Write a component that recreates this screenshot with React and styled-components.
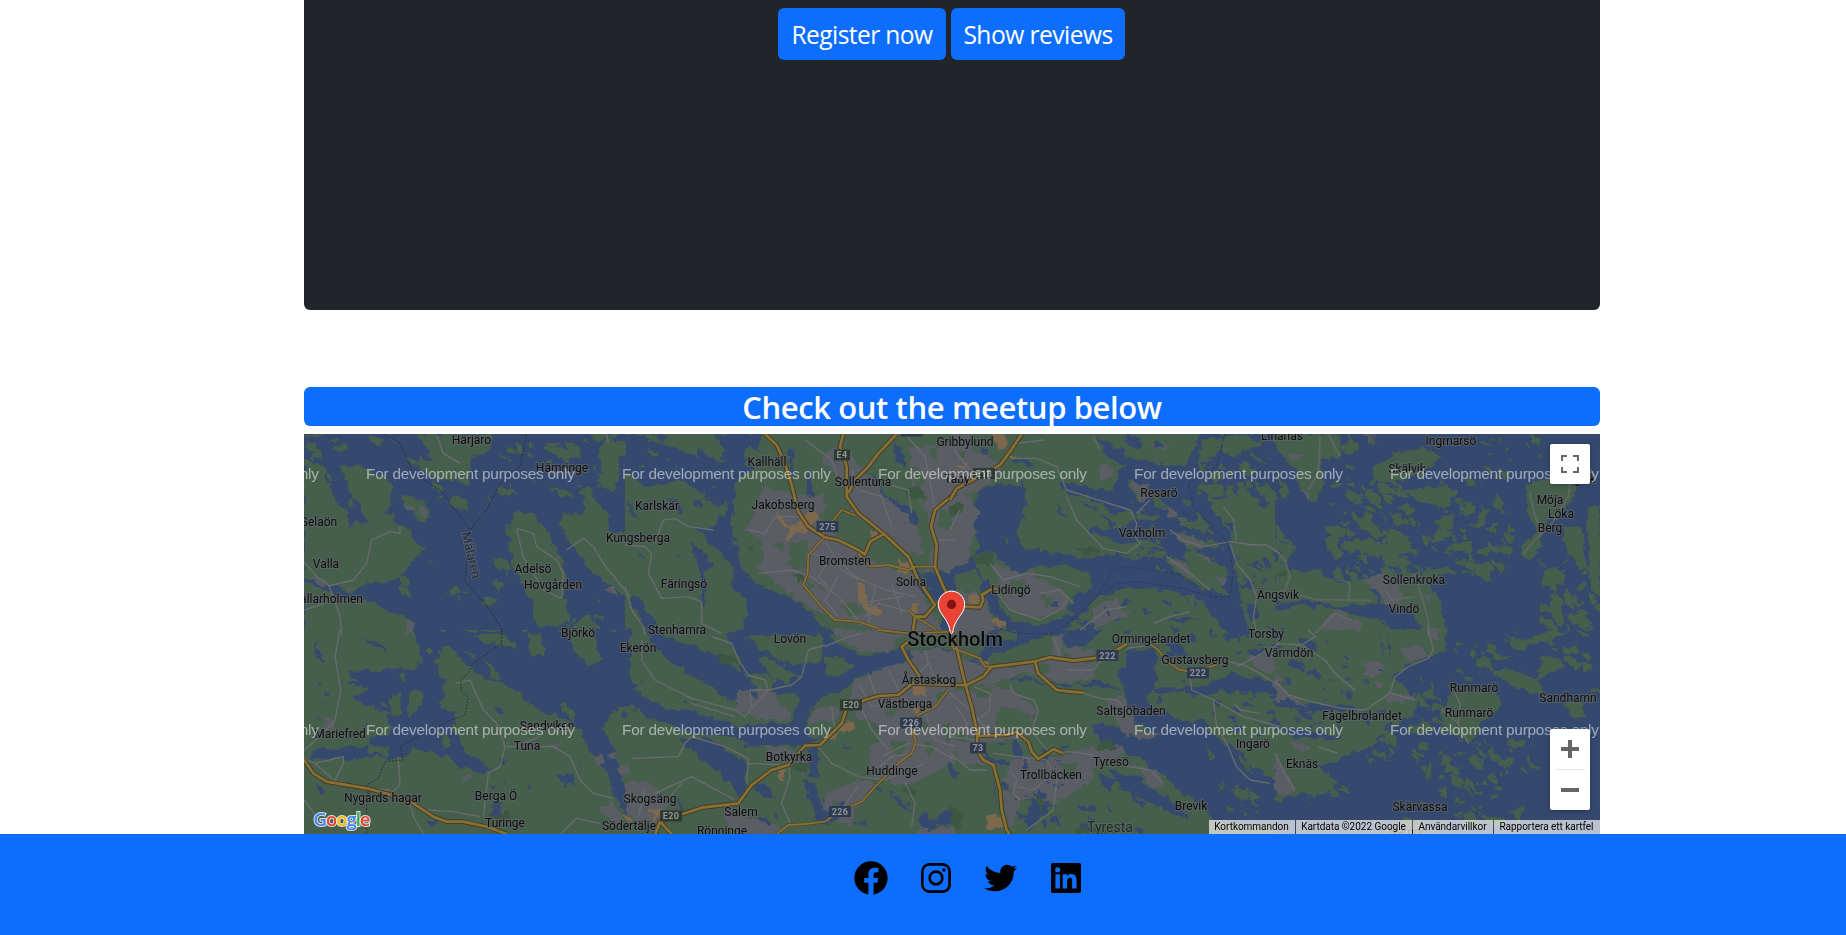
import React from "react";
import styled, { createGlobalStyle } from "styled-components";
import {
  BiLogoFacebookCircle,
  BiLogoInstagram,
  BiLogoTwitter,
  BiLogoLinkedinSquare,
} from "react-icons/bi";

const GlobalStyle = createGlobalStyle`
  *, *::before, *::after { box-sizing: border-box; }
  body {
    margin: 0;
    background: #fff;
    font-family: "Open Sans", "Noto Sans", sans-serif;
    overflow: hidden;
  }
`;

const Page = styled.div`
  display: flex;
  flex-direction: column;
  height: 935px;
`;

const Content = styled.main`
  width: 1296px;
  margin-left: 304px;
  display: flex;
  flex-direction: column;
`;

const Hero = styled.section`
  display: flex;
  justify-content: center;
  align-items: flex-start;
  gap: 5px;
  height: 310px;
  padding: 8px 1px 0 0;
  background: #212529;
  border-radius: 0 0 6px 6px;
`;

const Button = styled.button`
  width: ${(p) => p.$width}px;
  height: 52px;
  padding: 0;
  border: 0;
  border-radius: 6px;
  background: #0d6efd;
  color: #fff;
  font-family: inherit;
  font-size: 24.6px;
  line-height: 53px;
  letter-spacing: ${(p) => p.$tracking}px;
  white-space: nowrap;
`;

const Heading = styled.h2`
  margin: 77px 0 8px;
  height: 39px;
  border-radius: 6px;
  background: #0d6efd;
  color: #fff;
  font-size: 31px;
  font-weight: 600;
  line-height: 40px;
  letter-spacing: -0.4px;
  text-align: center;
  white-space: nowrap;
`;

const MapFrame = styled.section`
  position: relative;
  height: 400px;
  overflow: hidden;
  background: #35496e;
`;

const MapSvg = styled.svg`
  display: block;
  width: 1296px;
  height: 400px;
`;

const MapControls = styled.div`
  position: absolute;
  top: 10px;
  right: 10px;
  bottom: 24px;
  width: 40px;
  display: flex;
  flex-direction: column;
  justify-content: space-between;
`;

const ControlBox = styled.div`
  display: flex;
  flex-direction: column;
  align-items: center;
  height: ${(p) => p.$height}px;
  background: #fff;
  border-radius: 2px;
  box-shadow: 0 1px 4px rgba(0, 0, 0, 0.3);
`;

const ControlButton = styled.button`
  width: 40px;
  height: 40px;
  padding: 0;
  border: 0;
  background: transparent;
  display: flex;
  align-items: center;
  justify-content: center;
`;

const ControlDivider = styled.div`
  width: 30px;
  height: 1px;
  background: #e6e6e6;
`;

const Attribution = styled.div`
  position: absolute;
  right: 0;
  bottom: 0;
  display: flex;
  gap: 1px;
  height: 14px;
`;

const AttributionItem = styled.span`
  width: ${(p) => p.$width}px;
  padding-right: 1px;
  background: rgba(245, 245, 245, 0.7);
  color: #000;
  font: 10px/14px Roboto, sans-serif;
  letter-spacing: -0.03px;
  text-align: center;
  white-space: nowrap;
`;

const Footer = styled.footer`
  display: flex;
  align-items: flex-start;
  gap: 25px;
  height: 101px;
  padding: 24px 0 0 851px;
  background: #0d6efd;
  color: #000;
  svg { width: 40px; height: 40px; flex: none; }
`;

const WATER = "#35496e";
const LAND = "#465f4c";
const TOWN = "#5a5d64";
const PARK = "#3d5642";
const SAND = "#7e684d";

// Map sheets: origin on the map, base fill and [colour, path] layers at 3 units per pixel.
const sheets = [
  {
    x: 300, y: 430, base: WATER,
    layers: [
      [LAND, "M12 12H75L60 20 20 25ZM22 45 42 36 48 55 32 66ZM12 90 50 98 80 120 72 150 100 165 105 210 140 240 155 295 170 272 185 290 210 275 180 240 160 200 140 160 122 108 175 112 250 138 280 175 265 235 230 260 300 280 330 300 345 330 370 358 320 420 300 440 255 455 210 465 150 490 95 468 12 440Z"],
      [LAND, "M12 455 60 475 90 490 150 505 215 512 260 540 320 560 350 600 360 615H12ZM350 12H575L570 60 540 75 510 80 512 110 500 165 482 160 470 120 420 110 380 60ZM355 85 420 95 480 130 460 150 395 140 360 115ZM300 195 340 200 390 240 380 275 350 265 320 240ZM440 210 470 195 500 210 500 240 470 235Z"],
      [LAND, "M625 280 650 245 700 250 740 300 770 360 790 390 800 450 790 500 800 540 795 585 750 590 710 585 695 550 700 510 665 470 640 400 625 340ZM865 190 900 220 925 260 930 300 970 310 990 280V500L950 480 910 450 860 410 830 360 800 330 780 280 790 240 850 260ZM720 50 800 60 850 80 800 92ZM920 30H990V60L960 90 950 180 900 175 895 140 920 120 890 80ZM870 12H960L940 25 880 30ZM750 170 800 180 830 205 790 200ZM830 185 870 190 900 225 860 215ZM580 455 600 440 595 455 620 470 590 485ZM445 480 470 465 485 495 455 500ZM200 12 250 35 240 50 210 30ZM825 585 850 560 900 590 910 615H820Z"],
      [TOWN, "M315 220 345 225 340 245 320 240ZM355 225 375 240 380 265 360 250ZM765 380 780 375 775 395ZM915 475 940 470 960 500 930 490ZM320 575 345 580 335 615 320 610ZM30 435 90 460 60 470ZM140 465 165 475 150 485Z"],
    ],
    roads: ["M12 395 50 440 85 465 100 500 120 560 125 615M85 468 160 450 200 400 215 330 270 305 300 310 300 290M650 300 670 380 730 480 785 505 790 430 770 390 710 350 700 310 650 295M800 360 850 325 880 350 910 400 950 450 990 500M410 15 430 70 480 100M12 540 90 515M925 40 920 12"],
    rail: ["M250 12 300 40 340 130 420 180 510 300M680 12 660 110 600 160 560 240 510 300 495 455 570 540 610 605"],
  },
  {
    x: 300, y: 630, base: LAND,
    layers: [
      [WATER, "M350 30 330 0H990V220L960 230 930 260 905 300 930 340 950 380 965 430 990 520V570L960 530 940 480 920 420 870 360 830 290 780 265 730 240 680 220 650 180 600 160 550 140 500 110 470 60 430 50 405 90 410 130 440 150 430 190 420 230 470 250 455 290 480 340 500 370 580 420 560 432 480 410 440 380 380 365 340 360 310 385 220 378 150 390 50 385 20 390 60 355 200 350 220 320 265 315 275 290 260 240 200 230 160 200 200 180 150 130 200 110 220 130 270 115 350 110 360 65Z"],
      [WATER, "M770 435 815 435 828 460 790 465ZM45 40 75 80 70 100 45 65ZM200 25 255 50 258 65 230 55ZM370 572H430L400 590ZM580 520H605L595 560 570 565ZM40 455 75 485 60 490ZM590 235H605V245H590ZM50 150 62 165 58 175ZM565 460 590 465 580 480Z"],
      [LAND, "M520 12 600 10 650 40 640 55 560 40ZM685 10 720 20 735 80 690 75ZM805 0H880L905 95 860 105 820 60ZM480 60 520 75 525 90ZM545 85 580 110 605 150 580 140ZM270 200 300 192 305 255 275 262ZM340 175 370 190 360 230 330 265 322 235ZM420 305 450 320 458 355 430 360ZM195 345 270 350 260 375 210 370ZM310 140 322 158 308 152ZM780 220 820 240 828 280 800 260Z"],
      [TOWN, "M75 265 105 270 95 305 70 300ZM735 340 785 340 775 360ZM880 385 905 370 915 400 890 405ZM485 445 510 430 520 440 495 455ZM920 375 945 370 950 385ZM950 415 990 400V430L960 435ZM900 530 940 515 975 580 920 560Z"],
      [SAND, "M965 560 990 555V575Z"],
      [PARK, "M570 560 620 540 630 560 600 575Z"],
    ],
    roads: ["M120 0 105 80 122 180 105 270 60 320 12 360M12 385 45 400 100 450 200 475 270 480M45 400 130 380 130 400 105 450M295 380 300 465 250 510M12 510 50 560M380 540 460 545 540 560M465 160 510 150 550 240 590 280 615 350 600 410 565 430 550 560M615 350 760 350 810 380 840 450 880 490 940 505M780 615 830 565 900 580M330 525 345 570 370 610M640 350 720 320"],
    rail: ["M605 0V40L520 100 505 130 482 150 485 185 505 205 495 255 440 275 300 350 310 390 255 395 235 445 200 465V615"],
    gold: ["M12 390 40 430 80 455 200 475 265 492 340 520 400 560 440 575 490 575 560 590 620 612"],
  },
  {
    x: 625, y: 430, base: LAND,
    layers: [
      [WATER, "M0 12H130L100 40 180 60 230 90 260 130 270 170 230 190 180 150 120 160 60 175 30 140 0 130ZM270 12H410L400 60 370 45 350 90 382 120 330 160 330 230 320 290 335 330 340 400 380 450 440 480 510 510 600 590 640 615H350L360 560 370 510 320 480 330 420 300 380 250 340 210 290 260 300 290 240 240 200 250 150 200 110 220 60 280 100 300 60Z"],
      [WATER, "M200 335 240 370 270 410 240 425 245 520 235 530 225 420 200 370ZM30 490 60 540 100 580 110 615H70L50 570 20 520ZM490 50 505 60 510 140 500 160 495 110ZM545 125H565L560 200 545 212ZM735 130 790 200 870 240 880 270 860 300 800 240 760 200ZM812 35 830 60 838 120 815 85ZM895 430 990 425V615L940 590 960 530 920 500ZM870 400 910 480 930 520 900 500 870 440ZM0 210 40 260 20 260Z"],
      [LAND, "M60 15 90 15 105 35 70 30ZM60 60 110 70 100 85 70 80ZM280 240 300 210 310 230 290 270ZM320 320 350 340 340 360Z"],
      [TOWN, "M420 170 520 200 600 190 590 300 640 320 720 380 870 440 930 560 960 615H830L640 570 560 540 480 480 395 415 420 370 400 320 355 300 385 260ZM600 60 640 50 700 100 770 190 870 280 900 370 850 370 780 310 680 250 660 150 600 110ZM850 50 990 40V425H900L930 340 905 250 860 170Z"],
      [LAND, "M640 240 720 270 750 320 720 350 650 320ZM490 340 545 330 545 420 490 400ZM785 330 840 380 860 400 790 395 720 380ZM580 460 600 470 600 490ZM440 350 470 330 480 370ZM860 110 890 120 900 170 870 160ZM940 240 985 250 970 300 945 290ZM600 190 630 170 640 220 610 230ZM650 530 700 520 720 550 670 560ZM900 60 940 50 930 90ZM540 450 570 460 560 490ZM880 190 910 200 900 230Z"],
      [PARK, "M500 430 530 430 545 455 520 455ZM845 180 880 160 900 200 860 210ZM370 350 390 350 385 380Z"],
      [SAND, "M455 240 490 290 520 275 550 245 585 245 580 265 530 310 485 328 490 300 460 270ZM695 450 720 465 735 525 775 540 760 560 720 540 700 500ZM820 390 865 400 850 430 820 425ZM735 300 760 310 740 325ZM790 490 805 500 790 510ZM855 515 880 530 870 550Z"],
    ],
    roads: ["M0 470 20 540 55 590 60 615M0 345 60 350 80 370 70 430 110 505 190 500 230 515 230 580 290 610M100 310 115 270 150 265 190 290 265 300M100 310 90 340M540 30 620 90 640 150M400 430 500 420 560 440 640 500 700 570M555 370 640 390 690 440 780 480 870 500M370 300 420 310 450 260 520 260M600 330 650 420 700 450M840 12 900 80 920 180 930 240M780 160 850 180 860 250M680 120 700 180 770 200 800 290M640 440 600 510 640 560M720 560 760 520 850 545M940 330 990 330M620 380 580 440 610 470M750 470 730 580 770 600M800 460 830 550M700 520 830 500"],
    gold: ["M420 12 455 45 480 100 500 165 520 245 550 290 600 322 640 330 700 360 720 373 735 335 780 310", "M655 12 645 50 665 110 665 200 700 250 780 315 850 380 880 450 930 525 900 560 870 560 862 615", "M815 12 760 70 730 110 690 150 670 190", "M990 190 930 240 918 290 935 345 930 410 955 470 990 540"],
    thin: ["M595 325 550 375 548 430 535 465 590 530 630 570 700 575 790 605 850 610", "M595 312 600 300 650 240 695 258", "M700 370 735 410 790 405 850 420 870 410 930 410", "M850 540 870 560 920 590 950 615"],
  },
  {
    x: 625, y: 630, base: LAND,
    layers: [
      [WATER, "M0 100 40 190 100 220 130 240 200 240 300 280 350 290 390 280 500 280 510 230 530 200 500 190 430 190 460 150 400 130 360 130 330 60 300 10 340 0 410 60 480 100 600 100 720 80 830 50 845 75 750 120 700 140 640 190 590 205 550 240 545 320 590 325 540 345 360 348 330 320 200 310 110 270 60 260 0 200ZM60 0 130 20 260 70 360 130 400 180 370 200 310 212 240 160 140 100 90 50Z"],
      [WATER, "M180 325 240 320 290 350 365 400 360 490 340 500 280 420 220 380ZM545 355 578 350 580 440 555 440ZM540 455H570L600 580 570 570ZM590 0 650 50 760 100 850 60 990 55V90L870 88 770 120 620 150 590 100ZM890 550 930 575 990 520V580L900 600 880 575ZM390 460 440 485 450 500 410 495ZM740 265 780 300 800 320 750 290ZM645 345 680 355 665 362ZM150 480 180 550 170 550ZM780 470 840 520 860 560 820 520Z"],
      [LAND, "M600 80 650 75 690 110 640 140 600 130ZM400 70 480 110 530 140 480 155 420 130ZM140 150 210 185 240 200 180 210ZM240 200 310 230 380 220 340 250 260 235ZM20 170 90 180 130 230 80 215Z"],
      [TOWN, "M340 180 430 180 500 250 490 270 400 270 330 240ZM560 235 640 225 640 270 555 285ZM690 150 760 120 860 92 990 90V400L900 440 860 460 740 440 730 340 770 300 700 260 660 220ZM415 345 500 360 550 400 545 435 480 400 425 385ZM600 490 700 450 760 460 690 530 680 590 600 560ZM300 530 360 560 460 580 470 615H340L290 570ZM0 460 80 450 130 510 100 580 30 570 0 540ZM620 0H840L790 70 700 60ZM860 60H990V90H870ZM760 400 900 440 850 470 770 450ZM870 600 990 590V615H870Z"],
      [LAND, "M690 290 745 280 760 340 720 350ZM870 270 920 280 900 310ZM930 190 975 180 950 215ZM800 330 850 340 830 380 800 370ZM890 330 930 350 910 380ZM780 230 820 240 800 260ZM620 510 650 520 640 550ZM950 280 985 290 970 340Z"],
      [PARK, "M280 70 330 80 340 100 290 105ZM480 395 550 400 545 430 500 420ZM830 470 880 480 860 510Z"],
      [SAND, "M635 300 655 270 690 280 690 295 640 310ZM600 315 640 310 630 330 605 330ZM865 170 905 165 900 190 870 200ZM460 410 490 420 475 458 460 440ZM70 545 110 535 120 550 90 570ZM0 560 20 570 0 580ZM855 240 890 230 880 260Z"],
    ],
    roads: ["M50 30V90L90 150 200 205 330 240 360 260 385 230 430 180 500 165 530 140 550 60 600 45M380 235 375 180 430 180M90 490 200 440 330 510M130 505 170 460M20 385 160 380 180 340 200 320 300 350 370 385 365 460M370 400 480 405M490 400 495 440 470 520 495 580M580 350 620 400 700 440 780 450 900 400M840 455 870 520 860 590M700 215 740 300 790 360M600 50 670 20 710 10M260 20 320 40 340 90 370 135 420 150 430 180M700 160 740 230 850 215M730 130 760 220M790 120 830 200 850 215M770 380 850 340 920 350 990 390M900 60 910 100 880 130M900 250 930 330 990 350M740 430 800 380 860 370M640 550 700 470M60 480 40 560M200 220 330 260M620 230 630 300M910 100 940 160"],
    gold: ["M90 615 105 575 170 553 230 533 340 520 380 465 440 420 490 405 540 347 585 345 620 310 650 280 665 235 720 210 760 198 820 195 850 170 885 140 850 90 830 50 850 35", "M990 165 850 160", "M105 575 140 612"],
    thin: ["M455 612 490 585 540 582 600 575 640 545 710 515 760 460 820 400 860 370 873 335 860 300 880 255 930 230 970 180", "M760 0 850 10 990 5"],
  },
  {
    x: 950, y: 430, base: LAND,
    layers: [
      [WATER, "M85 180 140 160 230 172 225 230 200 310 210 350 300 370 400 382 500 372 640 380 700 420 770 480 840 500 895 615H840L740 500 640 480 540 470 440 500 380 570 320 615H180L110 520 90 480 100 450 70 420 0 440V415L50 400 90 350 65 270Z"],
      [WATER, "M440 20 500 60 560 90 700 110 730 60 750 12H990V200L940 230 860 190 790 210 800 240 850 340 860 430 895 615 850 560 840 500 800 440 700 400 560 360 640 350 600 330 500 340 410 295 490 300 560 270 545 240 500 250 420 210 350 190 330 150 490 185 500 130 530 110 470 80ZM210 150 230 180 215 220 230 270 210 250ZM320 220 350 260 330 250ZM380 210 500 280 490 300 430 230ZM180 90 220 80 260 110 200 100ZM80 40 110 60 120 100 90 80ZM40 220 80 220 70 270ZM880 440 920 460 900 480ZM900 400 920 390 930 420ZM650 565H750L700 580Z"],
      [LAND, "M80 365 130 370 200 430 320 402 425 430 420 480 370 500 370 550 280 585 200 580 150 540 130 470 80 420ZM600 20 700 20 690 80 640 100 590 60ZM530 150 590 170 640 200 560 210ZM560 245 630 260 620 275 565 265ZM670 255 760 280 790 315 700 290ZM660 305 700 310 800 350 720 355ZM700 370 760 370 840 430 800 460 730 430ZM650 380 700 390 790 470 760 480 670 420ZM760 20 790 50 770 95 745 90ZM810 20 880 15 940 40 850 80 815 60ZM760 170 800 160 830 190 780 200ZM870 195 940 210 920 230ZM500 375 580 380 560 395ZM620 405 650 415 630 430ZM160 320 178 335 172 350Z"],
      [TOWN, "M0 12H60L80 60 130 90 160 130 100 170 0 210ZM0 170 60 200 85 250 50 400 0 420ZM125 400 170 420 250 430 350 490 350 540 260 565 180 540ZM0 480 100 490 130 570 180 615H0ZM540 150 590 170 640 200 570 215ZM460 100 500 120 480 150 440 150ZM660 305 720 320 780 350 710 345ZM650 380 700 400 730 440 680 420ZM635 235 680 240 670 265ZM730 370 780 380 780 400ZM680 260 720 270 700 290ZM790 440 830 445 820 465ZM440 530 500 500 530 560 420 600ZM600 40 640 40 660 55 640 70Z"],
      [LAND, "M180 450 230 455 220 500 190 490ZM270 490 320 500 290 530ZM60 30 90 50 80 70ZM20 60 50 70 40 90Z"],
      [SAND, "M130 12H160L170 60 150 60ZM165 70 200 75 190 90ZM50 500 90 490 90 520 60 530ZM120 570 160 570 160 590 130 590ZM20 110 50 105 50 120Z"],
      [PARK, "M70 370 130 370 130 410 90 400ZM370 350 450 350 450 370 400 375ZM0 220 40 230 30 260 0 260Z"],
    ],
    roads: ["M200 85 260 85 320 110 350 180 430 205 540 240 560 280 555 320 570 340 530 370 460 355 380 270 350 200M660 300 700 330 760 350 840 335 910 345 950 345 990 370M840 340 860 400 900 450 920 500 910 560 920 615M120 400 160 450 230 430 300 440 390 470M130 470 180 540 270 570 330 540 350 510M270 490 330 480 370 520M820 230 850 270 860 330M390 600 440 560 470 540 530 530M650 380 720 430 780 480M430 20 450 60M200 40 280 30M610 580 660 560 720 545M560 250 600 210M30 240 0 300M12 60 60 120"],
    ferry: ["M440 500 490 420 530 410 680 430 800 500 840 500 850 430 835 340 730 230 715 160 800 110 825 12M300 612 380 560 440 500 500 460 560 455 700 475 800 505M130 590 200 610 300 612"],
    gold: ["M215 12 180 65 150 105 60 155 20 175 0 210", "M45 530 90 532 100 510 95 495 120 480 140 475"],
  },
  {
    x: 950, y: 630, base: LAND,
    layers: [
      [WATER, "M530 60 620 55 622 150 590 200 620 240 690 270 760 270 800 330 880 370 900 400 990 460V590L800 575 740 510 700 490 640 440 580 390 460 350 420 280 500 290 560 325 620 310 540 270 530 200 500 130 525 110ZM130 142 250 147 350 175 450 150 520 180 430 170 300 160ZM330 0H460L380 60 340 40ZM600 170 740 175 850 130 990 160V210L860 180 760 190 620 185ZM220 580 250 500 310 470 300 530 240 600ZM480 420 560 440 700 540 720 570 600 520 520 480ZM705 365 740 370 760 430 740 480 720 430ZM100 0H330L200 50 130 70 90 110 40 120 30 100 90 80ZM190 330 215 350 210 390 190 370ZM100 370 190 400 160 410 120 390ZM630 190 640 220 620 215ZM440 430 500 450 480 490ZM0 400 40 450 30 470 0 430ZM120 450 140 520 130 500ZM860 60 880 65 870 75Z"],
      [LAND, "M140 5 200 0 200 25 160 30ZM850 190 980 190 970 210 880 210ZM870 380 900 400 910 430 870 400ZM680 250 700 245 710 260 690 265ZM850 470 900 480 890 510 860 500ZM770 350 790 380 780 390Z"],
      [TOWN, "M0 60 100 110 200 105 320 80 440 100 430 140 390 150 350 160 220 130 130 160 0 170ZM0 190 120 165 190 180 260 240 230 330 100 330 0 300ZM200 380 300 390 420 350 500 340 530 370 430 410 430 450 320 520 200 500 160 450ZM550 400 620 420 640 470 600 470ZM460 210 520 200 560 300 640 310 590 330 530 320ZM0 330 80 330 120 400 40 410ZM340 50 430 60 430 90 370 90ZM890 80 990 60V130L920 120ZM160 480 220 500 180 600 170 550ZM310 20 340 10 340 80 300 80Z"],
      [LAND, "M60 170 130 175 120 200 70 200ZM30 420 100 440 130 540 120 600 40 590 0 520V460ZM130 240 180 230 250 260 230 310 140 300ZM330 400 380 400 370 440 340 430ZM250 110 290 100 300 125 260 130Z"],
      [PARK, "M380 590 500 590 520 610 380 615ZM0 520 40 560 30 600 0 580ZM250 480 290 520 270 540ZM430 350 480 330 500 350 450 360Z"],
      [SAND, "M110 560 140 555 170 570 165 590 120 600 100 590ZM80 90 120 95 110 110Z"],
    ],
    roads: ["M180 165 190 190 250 210 265 240 250 290 250 310 300 370 360 365 430 375 480 400 600 420 640 460M400 190 450 205 500 210 540 250M530 55 600 45M835 95 880 105 930 130 990 170M720 140 725 180 790 210 800 290 830 340 860 410 900 450 960 460M790 210 880 260 990 290M0 190 60 240 130 320M70 170 120 190 120 240 80 270M0 320 80 330M130 370 200 380 290 390 320 450 310 540 230 600M200 470 250 480 300 440M310 20 330 80M480 60 430 120 350 120M860 110 900 90 990 40M0 370 60 420 110 420M850 220 870 240 930 250M20 230 50 280 50 330M180 420 200 450 190 490 210 510"],
    gold: ["M0 165 50 165 100 140 125 110 170 105 250 95 300 82 370 92 450 82 500 60 530 42", "M255 95 265 130 320 180 360 185 400 188", "M12 20 45 160 65 230 82 310 80 360 100 390 130 405 150 480 155 540 170 600 180 615", "M82 318 170 315 200 305 235 335 245 365 265 387 310 358 340 370"],
    thin: ["M12 55 90 85 105 110 125 110", "M600 42 625 60 650 95 690 120 720 125 770 112 800 105", "M0 30 12 60"],
  },
  {
    x: 1275, y: 430, base: WATER,
    layers: [
      [LAND, "M0 285 60 350 30 400 60 420 140 425 190 460 270 450 310 520 200 530 100 510 0 530ZM0 12H190L200 80 140 90 150 160 120 222 80 185 60 120 30 90 0 40ZM285 160 300 110 360 70 440 50 500 80 450 120 400 145 340 155ZM0 540 60 530 150 530 230 550 340 580 350 615H0ZM260 450 340 430 440 430 460 470 490 490 500 540 520 615H460L400 540 320 520 310 480ZM755 165 800 145 860 150 910 150 890 210 870 240 800 300 790 370 760 390 735 370 750 330 785 300 755 230ZM935 235 975 230V500L950 480 940 380ZM860 290 920 290 930 420 900 400 880 370ZM210 330 330 345 400 320 400 365 340 385 200 360ZM390 180 520 170 525 230 430 215ZM560 290 600 285 620 240 645 235 620 290ZM0 120 40 190 20 200Z"],
      [TOWN, "M260 450 320 430 390 440 420 430 430 460 370 460 380 520 340 530 310 490ZM130 600 180 540 260 580 250 615H130ZM445 490 480 490 460 520ZM80 180 105 190 100 220ZM40 70 90 80 50 95ZM290 340 310 335 300 350ZM260 12 310 20 280 30Z"],
      [PARK, "M0 430 40 420 30 440Z"],
    ],
    roads: ["M0 360 30 390 45 440 30 480 0 490M70 495 130 510 200 510 290 512M220 510 225 460 200 450M420 430 440 500 460 570 460 615M135 20 130 130 100 180M160 12 195 80M885 160 880 200 830 280 780 330 745 370M765 190 780 260 800 300M330 480 350 510 420 500M120 610 180 550 250 580"],
  },
  {
    x: 1275, y: 630, base: WATER,
    layers: [
      [LAND, "M0 0H330L340 60 360 150 430 205 410 260 330 285 300 345 200 380 185 400 130 405 190 460 160 490 60 490 20 515 0 510ZM330 0H500L520 60 460 80 400 100 350 150 345 60ZM490 245 530 185 575 180 670 190 680 225 620 280 590 340 550 320 510 300ZM860 215 930 215 925 260 890 262ZM735 30 860 0 870 10 750 50ZM660 135 700 115 790 150 800 200 720 170ZM800 100 865 95 840 125 780 150ZM330 600 390 560 450 580 460 615H330ZM560 580 600 560 620 600ZM935 180 975 180V195ZM450 430 465 400 475 430 455 455ZM700 540 750 530 730 580Z"],
      [WATER, "M0 208 100 220 260 230 230 245 100 240 0 225ZM0 290 80 300 200 320 180 335 60 320ZM0 0 0 20 20 25ZM240 250 300 250 260 270ZM310 0 330 90 320 60Z"],
      [TOWN, "M0 130 40 190 110 230 60 220 0 210ZM260 100 310 90 330 120 300 140 270 130ZM380 60 430 40 460 80 400 90ZM340 190 420 190 410 215 330 215ZM0 380 40 430 60 480 20 500 0 490ZM300 150 330 170 300 180ZM490 240 510 230 510 250ZM40 330 110 350 90 370 60 360ZM450 0H490V30L470 30ZM560 320 580 330 565 335Z"],
    ],
    roads: ["M0 40 80 45 120 20 100 0M80 45 150 90 180 130 240 180M0 150 40 195 110 215 200 235 270 240 345 190 360 140 400 110 460 85 475 60 460 0M350 190 420 210M540 190 555 220 550 280 500 240M550 280 580 340M130 350 190 370M0 370 30 430 60 480"],
  },
];

// Archipelago areas filled with islets: [x, y, width, height, count, largest radius].
const isletAreas = [
  [1332, 484, 66, 96, 58, 5], [1358, 490, 95, 88, 66, 5.5], [1340, 436, 205, 50, 34, 4.5],
  [1445, 500, 65, 75, 40, 4.5], [1540, 560, 60, 70, 44, 5], [1385, 560, 60, 24, 14, 4],
  [1420, 640, 60, 190, 50, 4], [1470, 632, 120, 40, 32, 4.5], [1360, 720, 70, 45, 34, 4.5],
  [1440, 750, 60, 80, 44, 4], [1305, 785, 50, 20, 10, 3], [1475, 740, 60, 50, 18, 3.5],
  [1195, 440, 80, 60, 40, 4.5], [1130, 500, 95, 60, 30, 4], [1220, 770, 50, 50, 14, 3],
  [310, 440, 180, 90, 26, 4], [490, 440, 115, 60, 26, 4], [400, 560, 110, 50, 12, 3.5],
  [540, 600, 60, 30, 8, 4], [370, 650, 60, 60, 10, 3.5], [640, 434, 90, 60, 12, 3.5],
];

const inletAreas = [
  [1130, 600, 160, 60, 40, 4], [1180, 680, 100, 60, 30, 3.5], [1285, 640, 110, 90, 42, 4],
  [1040, 600, 90, 35, 16, 4], [1010, 780, 140, 50, 30, 3.5], [1110, 434, 60, 50, 16, 4],
  [620, 640, 150, 120, 28, 3.5], [760, 780, 180, 45, 16, 3.5], [1215, 520, 70, 80, 18, 3],
  [310, 650, 90, 80, 8, 3], [470, 760, 110, 40, 6, 3], [1000, 740, 70, 50, 14, 3.5],
  [640, 500, 60, 60, 8, 3],
];

function blobs(areas, seed) {
  let s = seed;
  const rnd = () => {
    s = (s * 1664525 + 1013904223) % 4294967296;
    return s / 4294967296;
  };
  let d = "";
  areas.forEach(([x, y, w, h, n, r]) => {
    for (let i = 0; i < n; i++) {
      const cx = x + rnd() * w;
      const cy = y + rnd() * h;
      const size = 1 + rnd() * rnd() * r * 1.6;
      const turn = rnd() * 1.1;
      for (let k = 0; k < 7; k++) {
        const a = (k / 7) * Math.PI * 2;
        const q = size * (0.6 + rnd() * 0.7);
        const px = Math.cos(a) * q * 1.6;
        const py = Math.sin(a) * q * 0.8;
        const X = cx + px * Math.cos(turn) - py * Math.sin(turn);
        const Y = cy + px * Math.sin(turn) + py * Math.cos(turn);
        d += (k ? "L" : "M") + X.toFixed(1) + " " + Y.toFixed(1);
      }
      d += "Z";
    }
  });
  return d;
}

const islets = blobs(isletAreas, 11);
const inlets = blobs(inletAreas, 29);

const places = [
  ["Härjäro", 471.5, 440], ["Hämringe", 562, 468], ["Selaön", 319, 522], ["Valla", 326, 564],
  ["Adelsö", 533, 569], ["Hovgården", 553, 585], ["Stallarholmen", 326, 599], ["Karlskär", 657, 506],
  ["Kungsberga", 638, 538], ["Färingsö", 684, 584], ["Stenhamra", 677, 630], ["Björkö", 578, 633],
  ["Ekerön", 638, 648], ["Mariefred", 340, 734], ["Sandviken", 547, 726], ["Tuna", 527, 746],
  ["Nygårds hagar", 383, 798], ["Berga Ö", 496, 796], ["Turinge", 505, 823], ["Södertälje", 629, 826],
  ["Skogsäng", 650, 799], ["Salem", 741, 812], ["Rönninge", 722, 831], ["Botkyrka", 789, 757],
  ["Huddinge", 892, 771], ["Västberga", 905, 704], ["Årstaskog", 929, 680], ["Lovön", 790, 639],
  ["Bromsten", 845, 561], ["Solna", 911, 582], ["Jakobsberg", 783, 505], ["Kallhäll", 767, 462],
  ["Sollentuna", 863, 482], ["Gribbylund", 965, 442], ["Täby", 957, 479], ["Lidingö", 1011, 590],
  ["Resarö", 1159, 493], ["Vaxholm", 1142, 533], ["Linanäs", 1282, 436], ["Ormingelandet", 1151, 639],
  ["Gustavsberg", 1195, 660], ["Saltsjöbaden", 1131, 711], ["Tyresö", 1111, 762], ["Trollbäcken", 1051, 775],
  ["Brevik", 1191, 806], ["Ingarö", 1253, 744], ["Ängsvik", 1278, 595], ["Torsby", 1266, 634],
  ["Värmdön", 1289, 653], ["Ingmarsö", 1451, 441], ["Skälvik", 1407, 469], ["Möja", 1550, 500],
  ["Löka", 1561, 514], ["Berg", 1550, 528], ["Sollenkroka", 1414, 580], ["Vindö", 1404, 609],
  ["Fågelbrolandet", 1362, 716], ["Runmarö", 1474, 688], ["Runmarö", 1469, 713], ["Sandhamn", 1568, 698],
  ["Eknäs", 1302, 764], ["Skärvassa", 1420, 807], ["Långvik", 1575, 479], ["Nämdö", 1408, 832],
];

const shields = [
  ["E4", 842, 455, 1], ["275", 827.5, 526.5, 0], ["E20", 851, 705, 1], ["E20", 671, 816, 1],
  ["226", 911, 723, 0], ["226", 840, 811.5, 0], ["222", 1107.5, 655.5, 0], ["222", 1198, 673, 0],
  ["73", 978, 748, 0], ["E18", 984, 473.5, 1], ["277", 912, 431, 0],
];

const PlaceLabel = styled.text`
  font: ${(p) => p.$weight || 400} ${(p) => p.$size || 12}px Roboto, sans-serif;
  text-anchor: middle;
  fill: ${(p) => p.$fill || "#0b0c0d"};
  paint-order: stroke;
  stroke: rgba(98, 101, 104, 0.75);
  stroke-width: 2px;
  stroke-linejoin: round;
`;

const Watermark = styled.text`
  font: 15.4px "Liberation Sans", Arial, sans-serif;
  fill: rgba(255, 255, 255, 0.52);
`;

const ShieldText = styled.text`
  font: 700 9px Roboto, sans-serif;
  letter-spacing: 0.4px;
  text-anchor: middle;
  fill: #8f949b;
`;

const LogoText = styled.text`
  font: 600 18.5px "Open Sans", sans-serif;
  paint-order: stroke;
  stroke: rgba(255, 255, 255, 0.8);
  stroke-width: 2px;
`;

function Roads({ sheet }) {
  return (
    <g transform={`translate(${sheet.x} ${sheet.y}) scale(.33333)`} fill="none" strokeLinejoin="round">
      {sheet.roads?.map((d) => <path key={d} d={d} stroke="#696b6c" strokeWidth="4" />)}
      {sheet.rail?.map((d) => <path key={d} d={d} stroke="#292d30" strokeWidth="3" strokeDasharray="5 5" />)}
      {sheet.ferry?.map((d) => <path key={d} d={d} stroke="#2a3b62" strokeWidth="3" strokeDasharray="14 5" />)}
      {sheet.thin?.map((d) => <path key={d} d={d} stroke="#4a4129" strokeWidth="9" />)}
      {sheet.gold?.map((d) => <path key={d} d={d} stroke="#453d26" strokeWidth="14" />)}
      {sheet.thin?.map((d) => <path key={d} d={d} stroke="#877034" strokeWidth="5.5" />)}
      {sheet.gold?.map((d) => <path key={d} d={d} stroke="#877034" strokeWidth="8" />)}
    </g>
  );
}

function StockholmMap() {
  return (
    <MapSvg viewBox="304 434 1296 400">
      <defs>
        <filter id="coast" filterUnits="userSpaceOnUse" x="290" y="420" width="1330" height="430" colorInterpolationFilters="sRGB">
          <feTurbulence type="fractalNoise" baseFrequency="0.11" numOctaves="3" seed="4" />
          <feDisplacementMap in="SourceGraphic" scale="10" xChannelSelector="R" yChannelSelector="G" />
        </filter>
      </defs>
      {sheets.map((t) => (
        <rect key={`${t.x}-${t.y}`} x={t.x} y={t.y} width="330" height="205" fill={t.base} />
      ))}
      <g filter="url(#coast)">
        {sheets.map((t) => (
          <g key={`${t.x}-${t.y}`} transform={`translate(${t.x} ${t.y}) scale(.33333)`}>
            {t.layers.map(([fill, d]) => <path key={d} d={d} fill={fill} />)}
          </g>
        ))}
        <path d={islets} fill={LAND} />
        <path d={inlets} fill={WATER} />
      </g>
      {sheets.map((t) => <Roads key={`${t.x}-${t.y}`} sheet={t} />)}
      {shields.map(([name, x, y, euro]) => {
        const w = name.length === 2 ? 16 : 22;
        return (
          <g key={`${name}-${x}`}>
            <rect x={x - w / 2} y={y - 5.5} width={w} height="11" fill={euro ? "#2f3a2f" : "#2d3a50"} />
            <ShieldText x={x} y={y + 3.2}>{name}</ShieldText>
          </g>
        );
      })}
      {places.map(([name, x, y]) => (
        <PlaceLabel key={`${name}-${y}`} x={x} y={y + 4.2}>{name}</PlaceLabel>
      ))}
      <PlaceLabel x="1110" y="832" $size={14} $fill="#202a25">Tyresta</PlaceLabel>
      <PlaceLabel $size={13} $fill="#1d2b48" transform="translate(467 556) rotate(77)">Mälaren</PlaceLabel>
      <PlaceLabel x="955" y="645.5" $size={20} $weight={500}>Stockholm</PlaceLabel>
      {[479, 735].map((y) =>
        [110, 366, 622, 878, 1134, 1390].map((x) => (
          <Watermark key={`${x}-${y}`} x={x} y={y} textLength="209">For development purposes only</Watermark>
        ))
      )}
      <path
        d="M951.500 591.200c-7.300 0-13.200 5.900-13.200 13.200 0 5.200 2.700 8.600 5.600 12.600 3.400 4.700 5.700 9.500 6.400 15.400q.2 1.100 1.200 1.100t1.200-1.100c.7-5.900 3-10.700 6.400-15.400 2.900-4 5.600-7.400 5.600-12.600 0-7.300-5.900-13.200-13.200-13.200Z"
        fill="#ea4335" stroke="#fff" strokeWidth="1"
      />
      <circle cx="951.5" cy="604.4" r="4.6" fill="#811411" />
      <LogoText x="313.5" y="826" textLength="57"><tspan fill="#4285f4">G</tspan><tspan fill="#ea4335">o</tspan><tspan fill="#fbbc05">o</tspan><tspan fill="#4285f4">g</tspan><tspan fill="#34a853">l</tspan><tspan fill="#ea4335">e</tspan></LogoText>
    </MapSvg>
  );
}

export default function App() {
  return (
    <>
      <GlobalStyle />
      <Page>
        <Content>
          <Hero>
            <Button $width={168} $tracking={-0.6}>Register now</Button>
            <Button $width={174} $tracking={-0.55}>Show reviews</Button>
          </Hero>
          <Heading>Check out the meetup below</Heading>
          <MapFrame>
            <StockholmMap />
            <MapControls>
              <ControlBox $height={40}>
                <ControlButton aria-label="Fullscreen">
                  <svg width="18" height="18" viewBox="0 0 18 18" fill="#666">
                    <path d="M0 0v6h2V2h4V0H0zM16 0h-4v2h4v4h2V0h-2zM16 16h-4v2h6v-6h-2v4zM2 12H0v6h6v-2H2v-4z" />
                  </svg>
                </ControlButton>
              </ControlBox>
              <ControlBox $height={81}>
                <ControlButton aria-label="Zoom in">
                  <svg width="18" height="18" viewBox="0 0 18 18" fill="#666">
                    <path d="M18 7h-7V0H7v7H0v4h7v7h4v-7h7z" />
                  </svg>
                </ControlButton>
                <ControlDivider />
                <ControlButton aria-label="Zoom out">
                  <svg width="18" height="18" viewBox="0 0 18 18" fill="#666">
                    <path d="M0 7h18v4H0z" />
                  </svg>
                </ControlButton>
              </ControlBox>
            </MapControls>
            <Attribution>
              <AttributionItem $width={86}>Kortkommandon</AttributionItem>
              <AttributionItem $width={116}>Kartdata ©2022 Google</AttributionItem>
              <AttributionItem $width={80}>Användarvillkor</AttributionItem>
              <AttributionItem $width={106}>Rapportera ett kartfel</AttributionItem>
            </Attribution>
          </MapFrame>
        </Content>
        <Footer>
          <BiLogoFacebookCircle />
          <BiLogoInstagram />
          <BiLogoTwitter />
          <BiLogoLinkedinSquare />
        </Footer>
      </Page>
    </>
  );
}
